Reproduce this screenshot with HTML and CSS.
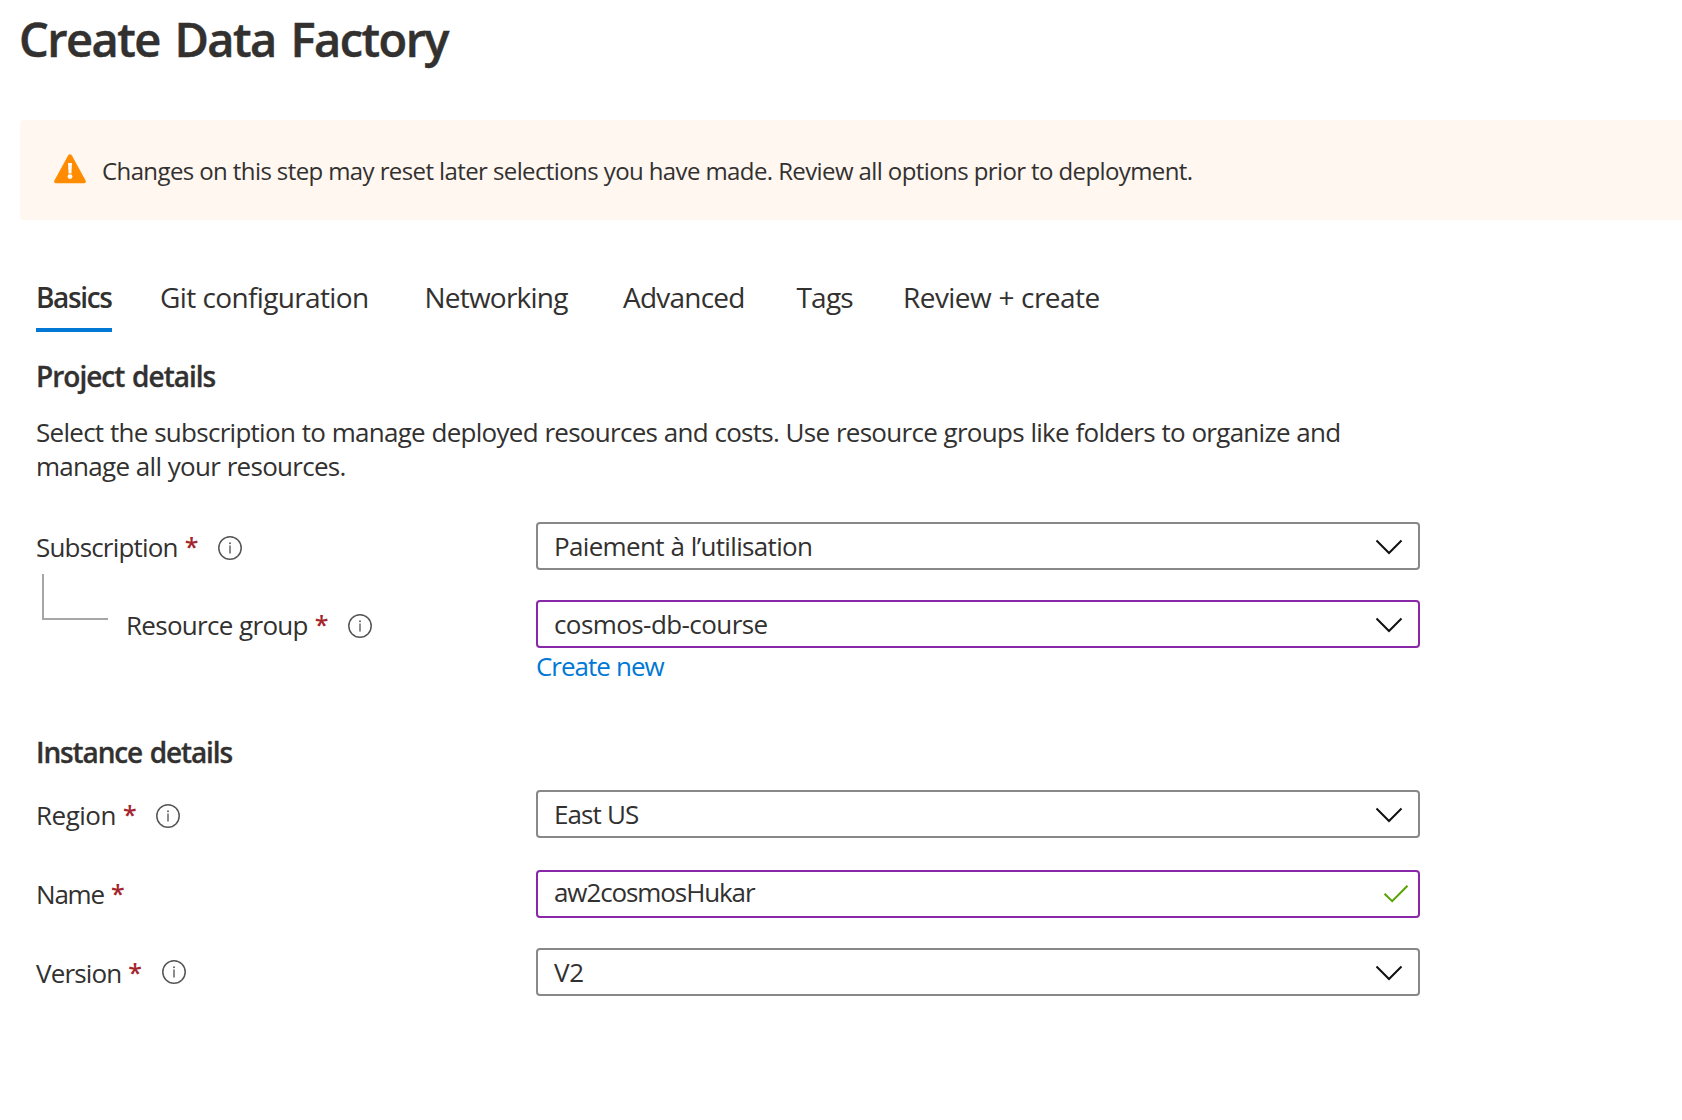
FILE: index.html
```
<!DOCTYPE html>
<html lang="en">
<head>
<meta charset="utf-8">
<title>Create Data Factory</title>
<link rel="stylesheet" href="styles.css">
</head>
<body>
<svg class="sprite" aria-hidden="true">
  <symbol id="info" viewBox="0 0 24 24">
    <circle cx="12" cy="12" r="11.2" fill="none" stroke="#555" stroke-width="1.5"/>
    <path d="M12 9.6V17.4" stroke="#666" stroke-width="1.5"/>
    <circle cx="12" cy="7.2" r="1" fill="#666"/>
  </symbol>
  <symbol id="chevron" viewBox="0 0 28 16">
    <path d="M1.5 1.5L14 14L26.5 1.5" fill="none" stroke="#111" stroke-width="2"/>
  </symbol>
</svg>

<h1 class="title">Create Data Factory</h1>

<div class="banner">
  <svg class="banner-icon" viewBox="0 0 32 30">
    <path d="M14.1 1.6Q16 -1 17.9 1.6L31.6 26.5Q32.6 29.2 30 29.2H2Q-.6 29.2 .4 26.5Z" fill="#ff8c00"/>
    <path d="M14 9H18L17.4 19.6H14.6Z" fill="#fff"/>
    <circle cx="16" cy="22.6" r="2.4" fill="#fff"/>
  </svg>
  <span class="banner-text">Changes on this step may reset later selections you have made. Review all options prior to deployment.</span>
</div>

<nav class="tabs">
  <a class="tab tab-active">Basics</a>
  <a class="tab">Git configuration</a>
  <a class="tab tab-tight">Networking</a>
  <a class="tab tab-tight">Advanced</a>
  <a class="tab tab-tags">Tags</a>
  <a class="tab tab-review">Review + create</a>
</nav>

<main class="form">
  <section class="section">
    <h2 class="heading">Project details</h2>
    <p class="intro">Select the subscription to manage deployed resources and costs. Use resource groups like folders to organize and manage all your resources.</p>
    <div class="rows">
      <div class="row">
        <div class="label label-subscription">Subscription<span class="star">*</span><svg class="info"><use href="#info"/></svg></div>
        <div class="field value-subscription">Paiement à l’utilisation<svg class="chevron"><use href="#chevron"/></svg></div>
      </div>
      <div class="row">
        <div class="label label-child"><span class="connector"></span>Resource group<span class="star">*</span><svg class="info"><use href="#info"/></svg></div>
        <div class="field field-edited">cosmos-db-course<svg class="chevron"><use href="#chevron"/></svg></div>
      </div>
    </div>
    <a class="create-new">Create new</a>
  </section>

  <section class="section section-instance">
    <h2 class="heading heading-instance">Instance details</h2>
    <div class="rows rows-instance">
      <div class="row">
        <div class="label label-region">Region<span class="star">*</span><svg class="info"><use href="#info"/></svg></div>
        <div class="field value-region">East US<svg class="chevron"><use href="#chevron"/></svg></div>
      </div>
      <div class="row row-name">
        <div class="label label-name">Name<span class="star">*</span></div>
        <div class="field field-edited value-name">aw2cosmosHukar<svg class="check" viewBox="0 0 26 20"><path d="M1.5 9.8L9.2 17.2L24.5 1.8" fill="none" stroke="#57a300" stroke-width="2"/></svg></div>
      </div>
      <div class="row">
        <div class="label label-version">Version<span class="star">*</span><svg class="info info-version"><use href="#info"/></svg></div>
        <div class="field value-version">V2<svg class="chevron"><use href="#chevron"/></svg></div>
      </div>
    </div>
  </section>
</main>
</body>
</html>
```
FILE: styles.css
```
* { box-sizing: border-box; }

body {
  margin: 0;
  background: #fff;
  color: #323130;
  font: 26px/34px "Open Sans", "Noto Sans", sans-serif;
  letter-spacing: -0.72px;
  word-spacing: 0.5px;
  overflow-x: hidden;
}

.sprite { position: absolute; width: 0; height: 0; }

.title {
  margin: 0 0 44px 19px;
  padding-top: 2px;
  font-size: 47px;
  font-weight: 600;
  line-height: 74px;
  letter-spacing: -1.55px;
  word-spacing: 4px;
  -webkit-text-stroke: 0.5px #323130;
}

.banner {
  display: flex;
  align-items: center;
  height: 100px;
  margin-left: 20px;
  padding-left: 34px;
  border-radius: 4px 0 0 4px;
  background: #fff7f0;
  font-size: 24px;
  letter-spacing: -0.6px;
  word-spacing: 0;
  white-space: nowrap;
}
.banner-icon { width: 32px; height: 30px; margin: 0 16px 3px 0; }
.banner-text { padding-top: 2px; }

.tabs {
  display: grid;
  grid-template-columns: 124px 264.5px 198.5px 173.5px 106.5px auto;
  justify-content: start;
  margin: 44px 0 0 36px;
  font-size: 28px;
  line-height: 64px;
  letter-spacing: -0.65px;
  white-space: nowrap;
}
.tab { padding-top: 2px; line-height: 62px; }
.tab-active {
  width: 76px;
  border-bottom: 4px solid #0078d4;
  font-weight: 600;
  letter-spacing: -1.35px;
}
.tab-tight { letter-spacing: -0.78px; }
.tab-tags { letter-spacing: -0.8px; }
.tab-review { letter-spacing: -0.55px; }

.form { width: 1384px; margin: 25px 0 0 36px; }

.heading {
  margin: 0;
  font-size: 28px;
  font-weight: 600;
  line-height: 38px;
  letter-spacing: -1px;
  word-spacing: 1.5px;
  -webkit-text-stroke: 0.3px #323130;
}
.heading-instance { letter-spacing: -1.13px; }

.intro { width: 1340px; margin: 20px 0 39px; letter-spacing: -0.72px; }

.rows { display: grid; gap: 30px; }
.row { display: grid; grid-template-columns: 500px 884px; }
.rows-instance { margin-top: 19px; }
.row-name { margin-top: 2px; }

.label { display: flex; align-items: center; padding-top: 2px; }
.label-subscription { letter-spacing: -0.82px; }
.label-child { padding-left: 90px; position: relative; }
.label-region { letter-spacing: -0.5px; }
.label-name { padding-top: 0; letter-spacing: -1.2px; }
.label-version { letter-spacing: -0.85px; }

/* elbow that ties the resource group to its subscription */
.connector {
  position: absolute;
  left: 6px;
  top: -26px;
  width: 66px;
  height: 46px;
  border: solid #a6a6a6;
  border-width: 0 0 2px 2px;
}

.star {
  margin: -3px 0 0 7px;
  width: 13px;
  color: #a4262c;
  font-weight: 600;
  font-size: 25px;
}
.info { width: 24px; height: 24px; margin: 2px 0 0 20px; }
.info-version { margin: -2px 0 0 21px; }

.field {
  display: flex;
  align-items: center;
  justify-content: space-between;
  height: 48px;
  padding: 0 15px 0 16px;
  border: 2px solid #8a8886;
  border-radius: 4px;
}
.field-edited { border-color: #8828a8; letter-spacing: -0.58px; }
.value-subscription { letter-spacing: -0.66px; }
.value-region { letter-spacing: -0.95px; }
.value-version { letter-spacing: -0.2px; }
.value-name { padding: 0 9px 4px 16px; letter-spacing: -1.1px; }

.chevron { width: 28px; height: 16px; margin-top: 2px; }
.check { width: 26px; height: 20px; margin-top: 4px; }

.create-new {
  display: block;
  width: max-content;
  margin: 2px 0 0 500px;
  color: #0078d4;
  line-height: 32px;
  letter-spacing: -1.02px;
}
.section-instance { margin-top: 51px; }
```
